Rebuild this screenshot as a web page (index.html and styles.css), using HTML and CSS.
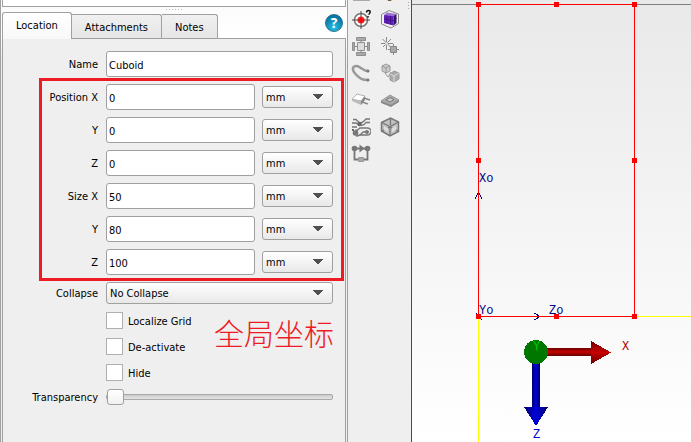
FILE: index.html
```html
<!DOCTYPE html>
<html lang="en">
<head>
<meta charset="utf-8">
<title>Cuboid</title>
<link rel="stylesheet" href="styles.css">
</head>
<body>
<main class="app">
  <section class="sidebar">
    <div class="upper"></div>
    <div class="splitter"></div>
    <header class="tabs">
      <button class="tab active" type="button">Location</button>
      <button class="tab" type="button">Attachments</button>
      <button class="tab" type="button">Notes</button>
      <button class="help" type="button" aria-label="Help">?</button>
    </header>
    <form class="pane">
      <div class="row"><label for="name">Name</label><input class="field" id="name" type="text" value="Cuboid"></div>
      <div class="group">
        <div class="row"><label for="px">Position X</label><input class="field" id="px" type="text" value="0"><select class="unit" aria-label="Position X unit"><option>mm</option></select></div>
        <div class="row"><label for="py">Y</label><input class="field" id="py" type="text" value="0"><select class="unit" aria-label="Position Y unit"><option>mm</option></select></div>
        <div class="row"><label for="pz">Z</label><input class="field" id="pz" type="text" value="0"><select class="unit" aria-label="Position Z unit"><option>mm</option></select></div>
        <div class="row"><label for="sx">Size X</label><input class="field" id="sx" type="text" value="50"><select class="unit" aria-label="Size X unit"><option>mm</option></select></div>
        <div class="row"><label for="sy">Y</label><input class="field" id="sy" type="text" value="80"><select class="unit" aria-label="Size Y unit"><option>mm</option></select></div>
        <div class="row"><label for="sz">Z</label><input class="field" id="sz" type="text" value="100"><select class="unit" aria-label="Size Z unit"><option>mm</option></select></div>
      </div>
      <div class="row"><label for="collapse">Collapse</label><select class="wide" id="collapse"><option>No Collapse</option></select></div>
      <div class="checks">
        <label><input type="checkbox"><span>Localize Grid</span></label>
        <label><input type="checkbox"><span>De-activate</span></label>
        <label><input type="checkbox"><span>Hide</span></label>
        <p class="note" lang="zh">全局坐标</p>
      </div>
      <div class="row slider"><label for="tr">Transparency</label><input id="tr" type="range" min="0" max="100" value="0"></div>
    </form>
  </section>

  <nav class="tools" aria-label="Tools">
    <div class="toolgrid">
      <button type="button" aria-label="Enclosure"><svg viewBox="0 0 20 20"><path d="M2 12h17v7H2z" fill="#ccc"/><path d="M2 18.500h17" stroke="#aaa"/></svg></button>
      <button type="button" aria-label="Source"><svg viewBox="0 0 20 20"><path d="M6 14h8l-3 5H8z" fill="#765c3c"/></svg></button>
      <button type="button" aria-label="Locate"><svg viewBox="0 0 20 20"><circle cx="10" cy="11" r="6.500" fill="#fff" stroke="#777" stroke-width="1.500"/><circle cx="10" cy="11" r="3.600" fill="#f22"/><path d="M10 2v18M1 11h18" stroke="#5a4040"/><path d="M8 11h4M10 9v4" stroke="#f00" stroke-width="2"/><path d="M15.500 3.500q0-2 2-2t1.500 2q0 1-1.500 2M17 7v1.500" fill="none" stroke="#111" stroke-width="1.500"/></svg></button>
      <button type="button" aria-label="Cuboid"><svg viewBox="0 0 20 20"><path d="M1.500 5.500 9 1.500l9.500 3.500v9.500L11 19l-9.500-4z" fill="#f2f2f2" stroke="#888"/><path d="m4 6 3-2.500L16.500 5l-3 2z" fill="#9b70d4"/><path d="m4 6 9.500 1v9.500L4 14z" fill="#6420b8"/><path d="m13.500 7 3-2v9l-3 2.500z" fill="#35106d"/><path d="M7 6.300v8.500M10.500 6.700v9M4 10l9.500 1.500 3-2" fill="none" stroke="#42138b"/></svg></button>
      <button type="button" aria-label="Fan"><svg viewBox="0 0 20 20"><g fill="#aaa" stroke="#8e8e8e"><path d="M5.500 1.500h9v3h-9zM5.500 16.500h9v3h-9zM1.500 6.500h2v8h-2zM16.500 6.500h2v8h-2z"/><path d="M6.500 6.500h7v8h-7z" fill="#ddd"/></g><path d="M10 5v2M10 14v2M4 10.500h2M14 10.500h2" stroke="#888"/></svg></button>
      <button type="button" aria-label="Power source"><svg viewBox="0 0 20 20"><path d="M6.500 1v13M1 7.500h12M2.500 3l9 9M11 3l-8 8" stroke="#888"/><circle cx="6.500" cy="7.500" r="1.500" fill="#ddd"/><path d="M10.500 10.500h6v6h-6z" fill="#aaa" stroke="#888"/><path d="M13.500 8v3M13.500 17v2M8 13.500h2M17 13.500h2" stroke="#888"/></svg></button>
      <button type="button" aria-label="Heat pipe"><svg viewBox="0 0 20 20"><path d="M17 8C12 8 9 3 5.500 3S0 6 4.500 11s7 6 12.500 6" fill="none" stroke="#999" stroke-width="2.500"/><circle cx="17" cy="8" r="1.500" fill="#777"/><circle cx="17" cy="17" r="1.500" fill="#777"/></svg></button>
      <button type="button" aria-label="Assembly"><svg viewBox="0 0 20 20"><g stroke="#999" stroke-linejoin="round"><path d="m2 3 4-2 4 2v5l-4 2-4-2z" fill="#ccc"/><path d="m2 3 4 2 4-2M6 5v5" fill="none"/><path d="m5 10 3 4 3-5" fill="none"/><path d="m10 11 4-3 5 2v6l-5 3-4-2z" fill="#aaa"/><path d="m10 11 4 2 5-3M14 13v6" fill="none" stroke="#ddd"/></g></svg></button>
      <button type="button" aria-label="Component"><svg viewBox="0 0 20 20"><path d="m1 9 5-5 8 2-4 5z" fill="#fff" stroke="#b3b3b3"/><path d="m1 9 9 2v4l-9-4z" fill="#bbb"/><path d="m10 11 4-5v4l-4 5z" fill="#888"/><path d="m13 8 6 2M11 12l6 2" fill="none" stroke="#888" stroke-width="1.500"/></svg></button>
      <button type="button" aria-label="Die"><svg viewBox="0 0 20 20"><path d="m1 11 9-6 9 5-8 5z" fill="#aaa" stroke="#999"/><path d="m1 11 10 4 8-5v2l-8 5-10-4z" fill="#888"/><path d="m6 10 4-2.500L14 9.500 10 12z" fill="#ccc" stroke="#777"/></svg></button>
      <button type="button" aria-label="Board"><svg viewBox="0 0 20 20"><g fill="none" stroke="#777" stroke-width="1.300"><path d="M2 2.500h3l4 4M1 6h4l3 2M9 6q2 0 4-2l2-2h4M10 8.500q3 0 5-3h4M1 10h5"/><path d="M4 13.500q3 0 5-2.500h7.500a3.500 3.500 0 0 1 0 7H9M5 19q4 0 7-4h4"/></g><circle cx="8.500" cy="7" r="2.200" fill="#666"/><circle cx="4.500" cy="16" r="2.800" fill="#777"/><circle cx="16" cy="15" r="2" fill="#777"/><path d="M1 13h2" stroke="#666" stroke-width="2"/></svg></button>
      <button type="button" aria-label="Region"><svg viewBox="0 0 20 20"><path d="m1.500 5.500 9-4.500 8 4v9.500L10 19l-8.500-5z" fill="#c2c2c2" stroke="#777" stroke-width="1.500"/><path d="m1.500 5.500 8.500 4 8.500-4.500M10 9.500V19M10.500 1v7M2 14l8-4 8 4" fill="none" stroke="#777" stroke-width="1.300"/><path d="m4 9 4 2v4l-4-2zM12 11l4-2v4l-4 2z" fill="#ddd"/></svg></button>
      <button type="button" aria-label="Network"><svg viewBox="0 0 20 20"><path d="M3.500 4.500h13v11h-13z" fill="none" stroke="#777" stroke-width="1.800"/><circle cx="3.500" cy="4.500" r="2.800" fill="#777"/><circle cx="16.500" cy="4.500" r="2.800" fill="#777"/><path d="m8.500.500 5 4-5 4z" fill="#777"/><path d="M7.500 13.500h5v4h-5z" fill="#aaa" stroke="#999"/></svg></button>
    </div>
    <div class="grip"></div>
  </nav>

  <section class="view" aria-label="Model view">
    <svg class="scene" shape-rendering="crispEdges">
      <defs>
        <linearGradient id="xr" x1="0" y1="0" x2="0" y2="1"><stop stop-color="#6b0000"/><stop offset=".5" stop-color="#c80000"/><stop offset="1" stop-color="#600000"/></linearGradient>
        <linearGradient id="zb"><stop stop-color="#000070"/><stop offset=".5" stop-color="#0000dc"/><stop offset="1" stop-color="#000060"/></linearGradient>
      </defs>
      <path d="M0 4.500h2000" stroke="#808080"/>
      <path d="M222 316.500h2000M66.500 316v2000" stroke="#ff0"/>
      <text class="axis" x="67" y="182">Xo</text>
      <text class="axis" x="67" y="314">Yo</text>
      <text class="axis" x="137" y="314">Zo</text>
      <path d="m63 199 3.500-7 3.500 7M122 313l6 3.500-6 3.500M64 313l6 7" fill="none" stroke="#000080"/>
      <path d="M66.500 4.500h156v312h-156z" fill="none" stroke="red"/>
      <path d="M64 2h5v5h-5zM142 2h5v5h-5zM220 2h5v5h-5zM64 158h5v5h-5zM220 158h5v5h-5zM64 314h5v5h-5zM142 314h5v5h-5zM220 314h5v5h-5z" fill="red"/>
      <path d="M134 348h46v8h-46z" fill="url(#xr)"/>
      <path d="m179 341 20 11.500-20 11.500z" fill="url(#xr)"/>
      <path d="M120 360h8v47h-8z" fill="url(#zb)"/>
      <path d="M112 407h24l-12 19z" fill="url(#zb)"/>
      <circle cx="124" cy="352" r="12" fill="#007800"/>
      <text class="axis y" x="121" y="350">Y</text>
      <text class="axis x" x="210" y="350">X</text>
      <text class="axis z" x="121" y="438">Z</text>
    </svg>
  </section>
</main>
</body>
</html>
```
FILE: styles.css
```css
* { box-sizing: border-box; }
body { margin: 0; background: #efefef; color: #000; }
body, button, input, select { font: 11px/14px "DejaVu Sans Condensed", "DejaVu Sans", sans-serif; }
.app { display: flex; min-height: 100vh; }

.sidebar { flex: 0 0 348px; padding: 0 1px 0 2px; display: flex; flex-direction: column; border-left: 1px solid #a0a0a0; border-right: 1px solid #a0a0a0; background: linear-gradient(#fafafa, #fff 38px, #efefef 60px); }
.upper { height: 7px; margin-left: -1px; background: #fff; border: 1px solid #a0a0a0; border-top: 0; }
.splitter { height: 5px; background: repeating-linear-gradient(90deg, #bbb 0 1px, transparent 1px 3px) center 2px / 17px 1px no-repeat; }
.tabs { display: flex; align-items: flex-end; height: 26px; margin-left: -1px; }
.tab { height: 24px; padding: 2px 13px 0; border: 1px solid #a0a0a0; border-left: 0; border-bottom: 0; border-radius: 0 3px 0 0; background: linear-gradient(#f0f0f0, #e6e6e6); }
.tab.active { position: relative; height: 27px; margin-bottom: -1px; padding-top: 0; border-left: 1px solid #a0a0a0; border-radius: 3px 3px 0 0; background: linear-gradient(#fff, #f8f8f8); }
.help { align-self: center; margin: 0 3px 4px auto; width: 18px; height: 18px; padding: 0; border: 1px solid #28718c; border-radius: 50%; background: radial-gradient(circle at 50% 80%, #28c0e8, #0878a4 70%); color: #fff; font: 700 14px/16px "Open Sans", sans-serif; }

.pane { flex: 1; display: flex; flex-direction: column; gap: 7px; margin-left: -1px; padding: 12px 12px 12px 0; border: 1px solid #a0a0a0; border-bottom: 0; background: #efefef; }
.row { display: grid; grid-template-columns: 96px 1fr; align-items: center; column-gap: 7px; }
.row label { text-align: right; padding: 2px 1px 0 0; white-space: nowrap; }
.group { position: relative; display: grid; gap: 7px; }
.group::after { content: ""; position: absolute; inset: -6px -11px -6px 36px; border: 3px solid #ed1c24; pointer-events: none; }
.group .row { grid-template-columns: 96px 1fr 71px; }
.field { width: 100%; min-width: 0; height: 26px; padding: 2px 2px 0; border: 1px solid #a0a0a0; border-radius: 3px; background: #fff; }
select { appearance: none; width: 100%; height: 22px; padding: 2px 3px 0; border: 1px solid #a0a0a0; border-radius: 3px; color: #000; background-image: linear-gradient(to top right, transparent 50%, #505050 50%), linear-gradient(to top left, transparent 50%, #505050 50%), linear-gradient(#fff, #e8e8e8); background-position: right 14px center, right 9px center, 0 0; background-size: 5px 6px, 5px 6px, auto; background-repeat: no-repeat; }
.checks { position: relative; display: grid; gap: 9px; margin-left: 103px; padding-top: 1px; }
.checks label { display: flex; align-items: center; gap: 5px; }
.checks span { padding-top: 2px; }
.checks input { appearance: none; width: 17px; height: 17px; margin: 0; border: 1px solid #b0b0b0; background: #fff; }
.note { position: absolute; left: 108px; top: 1px; margin: 0; color: #ed1c24; font: 300 30px/40px "Noto Sans CJK SC", sans-serif; white-space: nowrap; }
.slider { padding-top: 1px; }
.slider input { appearance: none; width: 100%; height: 16px; margin: 0; background: none; }
.slider input::-webkit-slider-runnable-track { height: 6px; border: 1px solid #a8a8a8; border-radius: 2px; background: linear-gradient(#ccc, #e4e4e4); }
.slider input::-webkit-slider-thumb { appearance: none; width: 17px; height: 16px; margin-top: -6px; border: 1px solid #a0a0a0; border-radius: 3px; background: linear-gradient(#fff, #f0f0f0); }

.tools { flex: 0 0 63px; display: flex; overflow: hidden; height: 100vh; padding-left: 3px; background: #efefef; }
.toolgrid { display: grid; grid-template-columns: 20px 20px; grid-auto-rows: 20px; gap: 7px 9px; align-content: start; margin-top: -18px; }
.toolgrid button { display: block; width: 20px; height: 20px; padding: 0; border: 0; background: none; }
.toolgrid svg { display: block; width: 20px; height: 20px; }
.grip { width: 1px; height: 7px; margin: 2px 2px 0 auto; background: repeating-linear-gradient(#aaa 0 1px, transparent 1px 3px); }

.view { flex: 1; min-width: 0; display: flex; border-left: 1px solid red; background: linear-gradient(#e9e9e9, #fff); }
.scene { flex: 1; min-width: 0; height: 100vh; overflow: hidden; }
.axis { font: 12px "Liberation Mono", monospace; fill: #000080; }
.axis.y { fill: #00c800; }
.axis.x { fill: #b00000; }
.axis.z { fill: #0000c8; }
```
